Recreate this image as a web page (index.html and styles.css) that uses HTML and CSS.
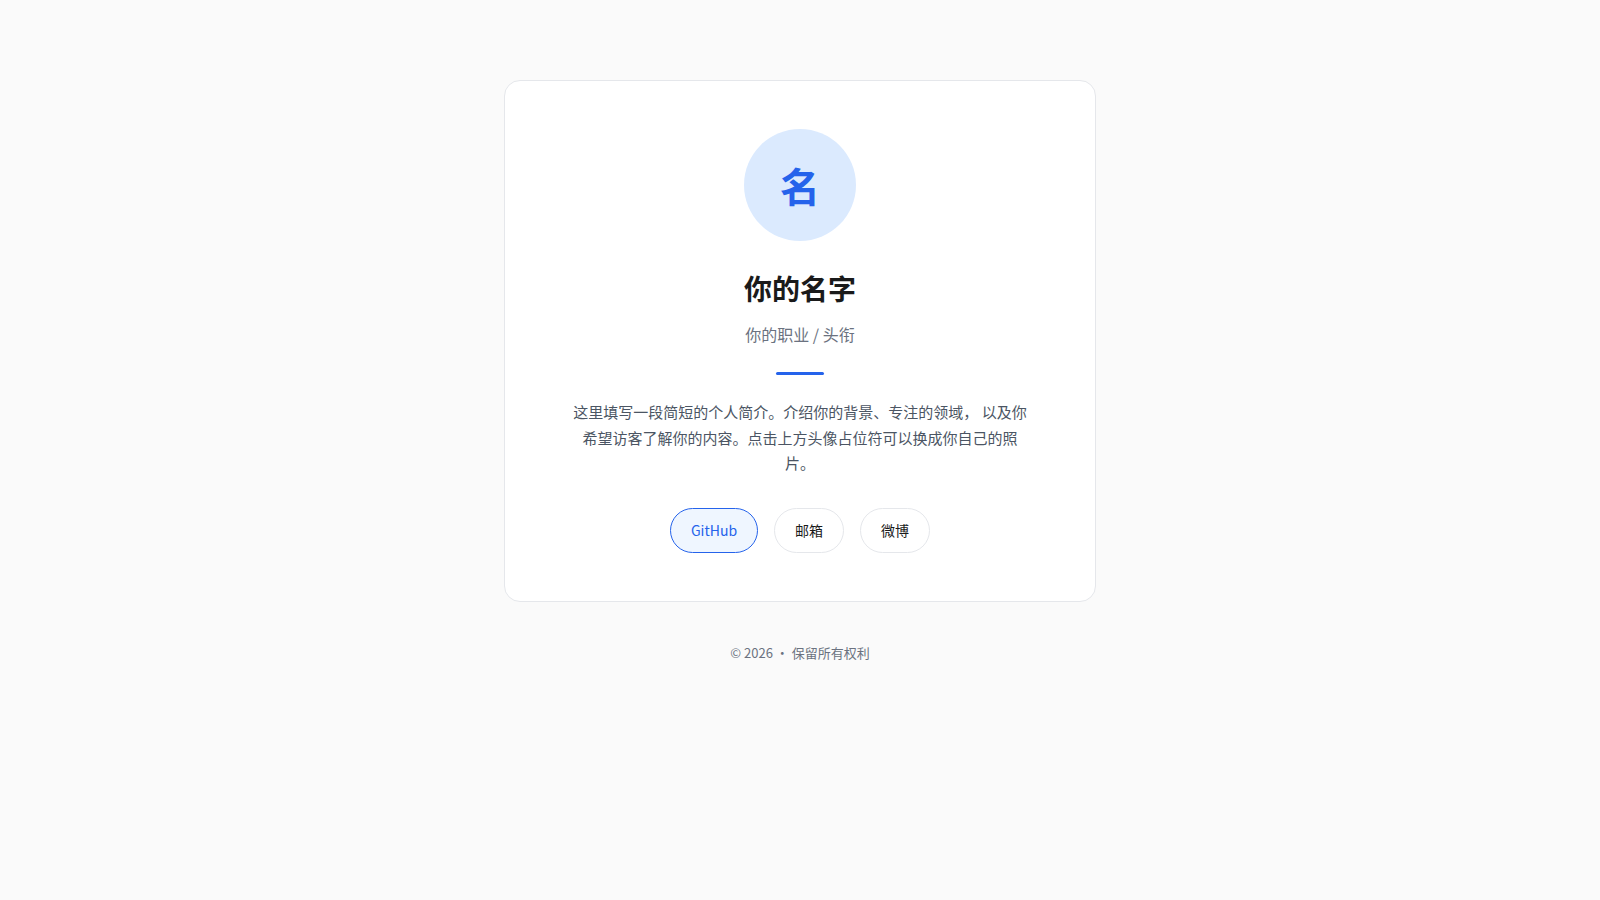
FILE: index.html
```html
<!DOCTYPE html>
<html lang="zh-CN">
<head>
	<meta charset="UTF-8">
	<title>你的名字</title>
	<link rel="stylesheet" href="styles.css">
</head>
<body>
	<main class="page">
		<div class="card">
			<div class="avatar">名</div>
			<h1 class="name">你的名字</h1>
			<p class="title">你的职业 / 头衔</p>
			<div class="divider"></div>
			<p class="bio">这里填写一段简短的个人简介。介绍你的背景、专注的领域， 以及你希望访客了解你的内容。点击上方头像占位符可以换成你自己的照片。</p>
			<div class="links">
				<a class="btn primary" href="#">GitHub</a>
				<a class="btn" href="#">邮箱</a>
				<a class="btn" href="#">微博</a>
			</div>
		</div>
		<footer class="footer">© 2026 · 保留所有权利</footer>
	</main>
</body>
</html>
```
FILE: styles.css
```css
body {
	margin: 0;
	background-color: #fafafa;
	font-family: "Noto Sans CJK SC", "Noto Sans", sans-serif;
	line-height: 1.6;
	color: #1a1a1a;
}

.page {
	display: flex;
	flex-direction: column;
	align-items: center;
	padding: 80px 16px;
}

.card {
	width: 592px;
	box-sizing: border-box;
	background-color: #fff;
	border: 1px solid #e5e7eb;
	border-radius: 16px;
	padding: 48px;
	display: flex;
	flex-direction: column;
	align-items: center;
	text-align: center;
}

.avatar {
	width: 112px;
	height: 112px;
	border-radius: 50%;
	background-color: #dbeafe;
	color: #2563eb;
	font-size: 40px;
	font-weight: bold;
	display: flex;
	align-items: center;
	justify-content: center;
}

.name {
	margin: 25px 0 0;
	font-size: 28px;
	font-weight: bold;
	line-height: 1.6;
	color: #1a1a1a;
}

.title {
	margin: 11px 0 0;
	font-size: 16px;
	color: #6b7280;
}

.divider {
	width: 48px;
	height: 3px;
	border-radius: 2px;
	background-color: #2563eb;
	margin-top: 25px;
}

.bio {
	max-width: 460px;
	margin: 24px 0 0;
	font-size: 15px;
	line-height: 1.7;
	color: #4b5563;
}

.links {
	display: flex;
	gap: 16px;
	margin-top: 32px;
}

.btn {
	display: inline-block;
	padding: 10.5px 20px;
	font-size: 14px;
	line-height: 1.6;
	color: #1a1a1a;
	text-decoration: none;
	background-color: #fff;
	border: 1px solid #e5e7eb;
	border-radius: 999px;
}

.btn.primary {
	color: #2563eb;
	background-color: #eff6ff;
	border-color: #2563eb;
}

.footer {
	margin-top: 41px;
	font-size: 13px;
	color: #6b7280;
}
```
